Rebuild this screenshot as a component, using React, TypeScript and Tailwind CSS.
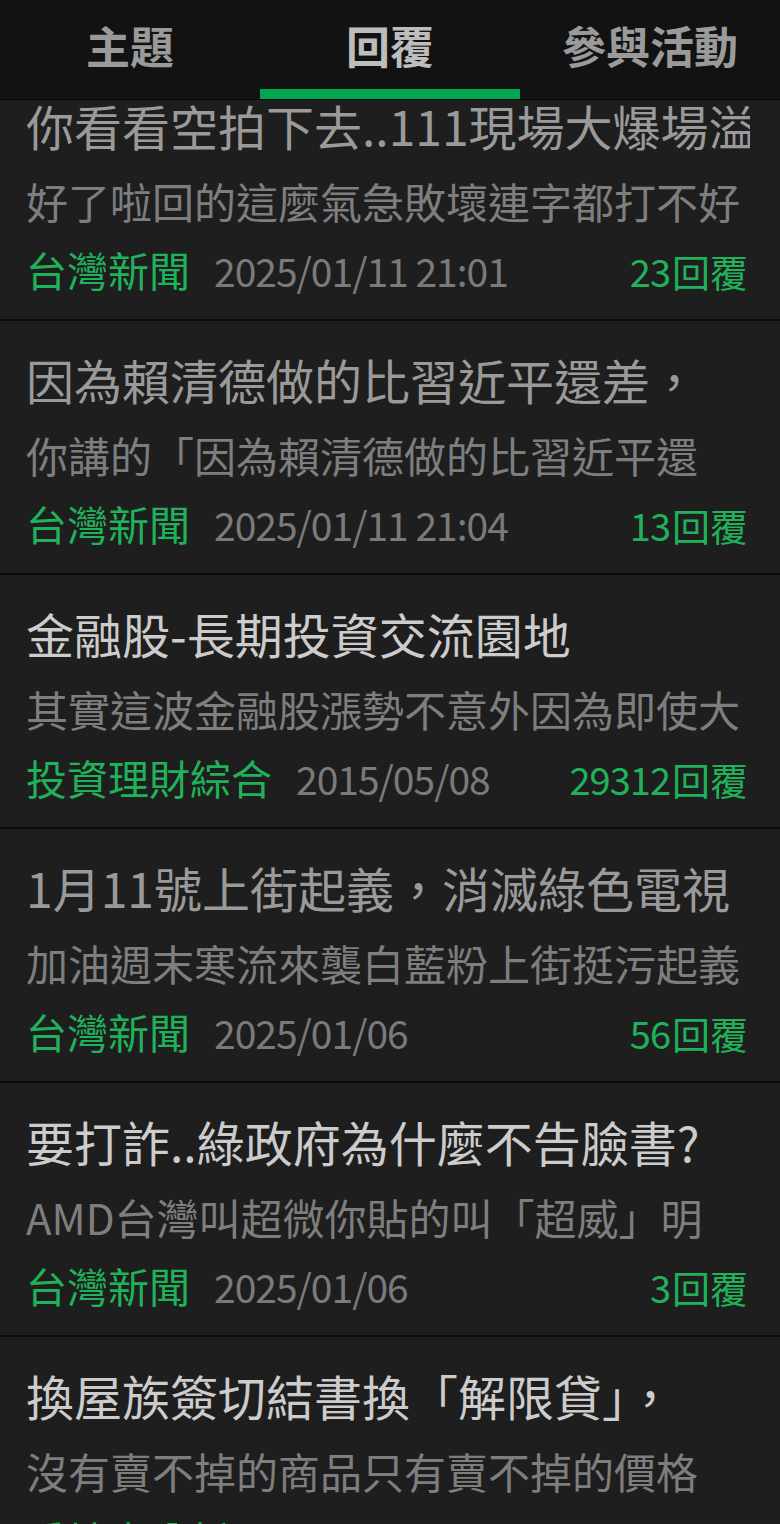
const font = { fontFamily: '"Noto Sans CJK TC", "Noto Sans", sans-serif' }

interface Post {
  title: string
  excerpt: string
  board: string
  date: string
  replies: string
  read: boolean
}

const posts: Post[] = [
  { title: '你看看空拍下去..111現場大爆場溢', excerpt: '好了啦回的這麼氣急敗壞連字都打不好', board: '台灣新聞', date: '2025/01/11 21:01', replies: '23', read: true },
  { title: '因為賴清德做的比習近平還差，', excerpt: '你講的「因為賴清德做的比習近平還', board: '台灣新聞', date: '2025/01/11 21:04', replies: '13', read: true },
  { title: '金融股-長期投資交流園地', excerpt: '其實這波金融股漲勢不意外因為即使大', board: '投資理財綜合', date: '2015/05/08', replies: '29312', read: false },
  { title: '1月11號上街起義，消滅綠色電視', excerpt: '加油週末寒流來襲白藍粉上街挺污起義', board: '台灣新聞', date: '2025/01/06', replies: '56', read: true },
  { title: '要打詐..綠政府為什麼不告臉書?', excerpt: 'AMD台灣叫超微你貼的叫「超威」明', board: '台灣新聞', date: '2025/01/06', replies: '3', read: false },
  { title: '換屋族簽切結書換「解限貸」，', excerpt: '沒有賣不掉的商品只有賣不掉的價格', board: '房地產分析', date: '2024/12/31', replies: '8', read: false },
]

function PostRow({ post }: { post: Post }) {
  return (
    <div className="bg-[#1e1e1e] border-b-2 border-[#0c0c0c] pl-[26px] pr-[30px] pt-[20px] pb-[18px]">
      {/* Title */}
      <div
        className={`text-[48px] leading-[76px] whitespace-nowrap overflow-hidden ${post.read ? 'text-[#9a9a9a]' : 'text-[#cccccc]'}`}
      >
        {post.title}
      </div>
      {/* Excerpt */}
      <div className="text-[42px] leading-[76px] whitespace-nowrap overflow-hidden text-[#7e7e7e]">
        {post.excerpt}
      </div>
      {/* Meta */}
      <div className="flex items-center h-[62px] whitespace-nowrap pr-[2px]">
        <span className="text-[41px] text-[#1fb25a]">{post.board}</span>
        <span className="ml-[24px] text-[39px] tracking-[-1px] text-[#7a7a7a]">{post.date}</span>
        <span className="ml-auto text-[38px] text-[#1fb25a] flex items-center gap-[2px]">
          <span className="tracking-[-1px]">{post.replies}</span>
          <span>回覆</span>
        </span>
      </div>
    </div>
  )
}

export default function App() {
  const tabs = ['主題', '回覆', '參與活動']
  return (
    <div className="w-[780px] h-[1524px] overflow-hidden bg-[#1e1e1e] flex flex-col" style={font}>
      {/* Tab bar */}
      <header className="relative z-10 h-[100px] shrink-0 bg-[#121212] border-b border-[#080808] flex">
        {tabs.map((t, i) => (
          <div key={t} className="flex-1 flex flex-col items-center">
            <div
              className={`h-[90px] flex items-center justify-center text-[44px] font-bold ${i === 1 ? 'text-[#bdbdbd]' : 'text-[#9a9a9a]'}`}
            >
              {t}
            </div>
            {i === 1 && <div className="w-full h-[10px] bg-[#00a650]" />}
          </div>
        ))}
      </header>

      {/* Scrolled post list */}
      <div className="flex-1 overflow-hidden">
        <div className="-mt-[33px]">
          {posts.map((p) => (
            <PostRow key={p.title} post={p} />
          ))}
        </div>
      </div>
    </div>
  )
}
